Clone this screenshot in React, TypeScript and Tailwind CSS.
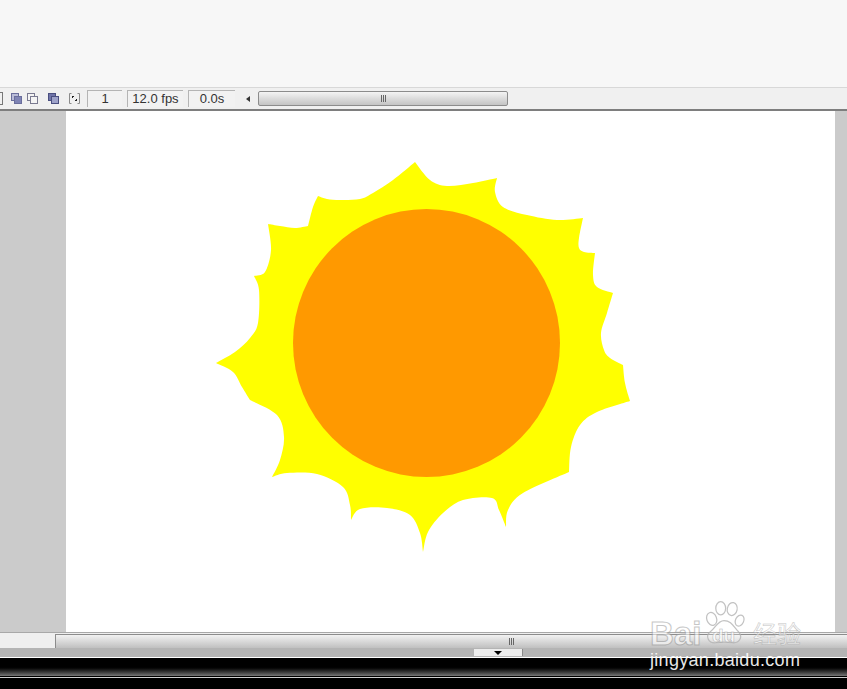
const sunSegments: number[][][] = [
  [[415, 162], [430, 180], [447, 186], [473, 183], [497, 178]],
  [[497, 178], [495, 192], [503, 207], [527, 215], [557, 220], [583, 218]],
  [[583, 218], [579, 238], [579, 248], [584, 252], [595, 253]],
  [[595, 253], [593, 275], [597, 287], [613, 293]],
  [[613, 293], [607, 313], [601, 333], [604, 350], [610, 358], [623, 365]],
  [[623, 365], [625, 383], [630, 401]],
  [[630, 401], [597, 412], [580, 425], [571, 447], [569, 472]],
  [[569, 472], [523, 493], [508, 510], [506, 527]],
  [[506, 527], [499, 510], [492, 498], [463, 500], [443, 513], [428, 532], [423, 552]],
  [[423, 552], [420, 533], [410, 515], [387, 508], [360, 509], [351, 520]],
  [[351, 520], [350, 505], [343, 487], [317, 474], [287, 473], [272, 477]],
  [[272, 477], [280, 460], [284, 437], [277, 415], [250, 400]],
  [[250, 400], [242, 387], [233, 372], [216, 363]],
  [[216, 363], [235, 352], [250, 338], [258, 323], [259, 290], [254, 276]],
  [[254, 276], [265, 272], [271, 250], [268, 224]],
  [[268, 224], [280, 226], [295, 228], [308, 226]],
  [[308, 226], [313, 207], [318, 196]],
  [[318, 196], [327, 199], [340, 200], [360, 199], [373, 193], [393, 180], [415, 162]],
];

function sunPath() {
  let d = `M${sunSegments[0][0][0]} ${sunSegments[0][0][1]}`;
  for (const pts of sunSegments) {
    for (let i = 0; i < pts.length - 1; i++) {
      const p0 = pts[Math.max(i - 1, 0)];
      const p1 = pts[i];
      const p2 = pts[i + 1];
      const p3 = pts[Math.min(i + 2, pts.length - 1)];
      const c1x = p1[0] + (p2[0] - p0[0]) / 6;
      const c1y = p1[1] + (p2[1] - p0[1]) / 6;
      const c2x = p2[0] - (p3[0] - p1[0]) / 6;
      const c2y = p2[1] - (p3[1] - p1[1]) / 6;
      d += ` C${c1x} ${c1y} ${c2x} ${c2y} ${p2[0]} ${p2[1]}`;
    }
  }
  return d + 'Z';
}

// two overlapping squares, the toolbar's onion skin buttons
function OnionIcon({ back, front, stroke }: { back: string; front: string; stroke: string }) {
  return (
    <svg width="11" height="11" viewBox="0 0 11 11" className="shrink-0">
      <rect x="0.5" y="0.5" width="7" height="7" fill={back} stroke={stroke} />
      <rect x="3.5" y="3.5" width="7" height="7" fill={front} stroke={stroke} />
    </svg>
  );
}

function FrameBox({ w, text }: { w: string; text: string }) {
  return (
    <div className={`${w} h-[17px] border-l border-t border-[#b4b4b4] bg-[#f2f2f2] flex items-center justify-center text-[13px] text-[#333] shrink-0`}>
      {text}
    </div>
  );
}

function Grip() {
  return (
    <div className="flex gap-px">
      <div className="w-px h-[7px] bg-[#666]" />
      <div className="w-px h-[7px] bg-[#666]" />
      <div className="w-px h-[7px] bg-[#666]" />
    </div>
  );
}

export default function App() {
  return (
    <div className="w-[847px] h-[689px] relative overflow-hidden flex flex-col bg-[#f7f7f7] font-['Liberation_Sans',sans-serif]">
      <div className="h-[88px] bg-[#f7f7f7] border-b border-[#d8d8d8] shrink-0" />

      {/* timeline toolbar */}
      <div className="h-[21px] bg-[#f0f0f0] flex items-center shrink-0">
        <div className="w-[3px] h-[13px] border-r border-y border-[#777] mr-2 shrink-0" />
        <div className="flex items-center gap-[5px]">
          <OnionIcon back="#b9bcd8" front="#7f84b5" stroke="#6a6e9c" />
          <OnionIcon back="#f4f4f4" front="#f4f4f4" stroke="#7a7a90" />
        </div>
        <div className="ml-[10px]">
          <OnionIcon back="#6f74a8" front="#9ea2c9" stroke="#4a4f80" />
        </div>
        <svg width="11" height="11" viewBox="0 0 11 11" fill="none" className="ml-[10px] shrink-0">
          <path d="M2.500 .5H.5V10.500H2.500M8.500 .5H10.500V10.500H8.500" stroke="#8a8a8a" />
          <path d="M3 3H5V4H4V5H3ZM8 8H6V7H7V6H8Z" fill="#222" />
        </svg>
        <div className="ml-[7px] flex items-center gap-[5px]">
          <FrameBox w="w-[35px]" text="1" />
          <FrameBox w="w-[56px]" text="12.0 fps" />
          <FrameBox w="w-[47px]" text="0.0s" />
        </div>
        <div className="ml-[11px] w-0 h-0 border-y-[3px] border-y-transparent border-r-[4px] border-r-[#333] shrink-0" />
        <div className="ml-[8px] w-[250px] h-[15px] rounded-[2px] border border-[#8c8c8c] bg-gradient-to-b from-[#f4f4f4] to-[#c4c4c4] flex items-center justify-center">
          <Grip />
        </div>
      </div>
      <div className="h-[2px] bg-[#7e7e7e] shrink-0" />

      {/* stage */}
      <div className="h-[521px] bg-[#cbcbcb] flex shrink-0">
        <div className="w-[66px] shrink-0" />
        <div className="w-[769px] bg-white shrink-0">
          <svg width="769" height="521" viewBox="66 111 769 521" className="block">
            <path d={sunPath()} fill="#ffff00" />
            <ellipse cx="426.500" cy="343" rx="133.500" ry="134" fill="#ff9900" />
          </svg>
        </div>
      </div>

      {/* horizontal scrollbar, its thumb runs off the right edge */}
      <div className="h-[16px] bg-[#efefef] border-t border-[#a8a8a8] flex items-stretch shrink-0 pt-[1px]">
        <div className="w-[55px] shrink-0" />
        <div className="w-[912px] shrink-0 border-l border-t border-[#8c8c8c] bg-gradient-to-b from-[#f2f2f2] to-[#c0c0c0] flex items-center justify-center">
          <Grip />
        </div>
      </div>

      <div className="h-[9px] bg-[#b4b4b4] flex shrink-0 pt-px">
        <div className="ml-[474px] w-[49px] h-[7px] bg-[#ececec] border-r border-[#8a8a8a] flex items-center justify-center">
          <div className="w-0 h-0 border-x-[4px] border-x-transparent border-t-[4px] border-t-black" />
        </div>
      </div>

      {/* bottom dark strip */}
      <div className="h-px bg-white shrink-0" />
      <div className="h-[8px] bg-black shrink-0" />
      <div className="h-[10px] bg-gradient-to-b from-black to-[#777] shrink-0" />
      <div className="h-px bg-black shrink-0" />
      <div className="h-px bg-[#d0d0d0] shrink-0" />
      <div className="flex-1 bg-black" />

      {/* watermark */}
      <div className="absolute left-[650px] top-[598px] w-[155px] h-[72px] text-white">
        <div className="absolute left-0 top-[18px] text-[33px] leading-[36px] font-bold opacity-55 [-webkit-text-stroke:1px_#999999]">Bai</div>
        <svg width="46" height="50" viewBox="0 0 56 54" className="absolute left-[51px] top-0 opacity-80" fill="#ffffff" fillOpacity="0.3" stroke="#b4b4b4" strokeWidth="1.500">
          <ellipse cx="13" cy="22" rx="6" ry="8" transform="rotate(-20 13 22)" />
          <ellipse cx="24" cy="9" rx="6" ry="8" />
          <ellipse cx="38" cy="10" rx="6" ry="8" transform="rotate(12 38 10)" />
          <ellipse cx="47" cy="24" rx="5" ry="7" transform="rotate(25 47 24)" />
          <path d="M28 24C20 24 18 33 11 38C5 43 9 52 18 51C24 50 32 50 38 51C47 52 51 44 46 38C40 32 37 24 28 24Z" />
        </svg>
        <div className="absolute left-[62px] top-[27px] text-[19px] leading-[22px] font-bold opacity-70 [-webkit-text-stroke:0.5px_#999999]">du</div>
        <div className="absolute left-[103px] top-[22px] text-[24px] leading-[26px] opacity-60 font-['Noto_Sans_CJK_SC',sans-serif] [-webkit-text-stroke:0.5px_#999999]">经验</div>
        <div className="absolute left-0 top-[52px] text-[18px] leading-[20px] whitespace-nowrap opacity-90 tracking-[0.3px]">jingyan.baidu.com</div>
      </div>
    </div>
  );
}
